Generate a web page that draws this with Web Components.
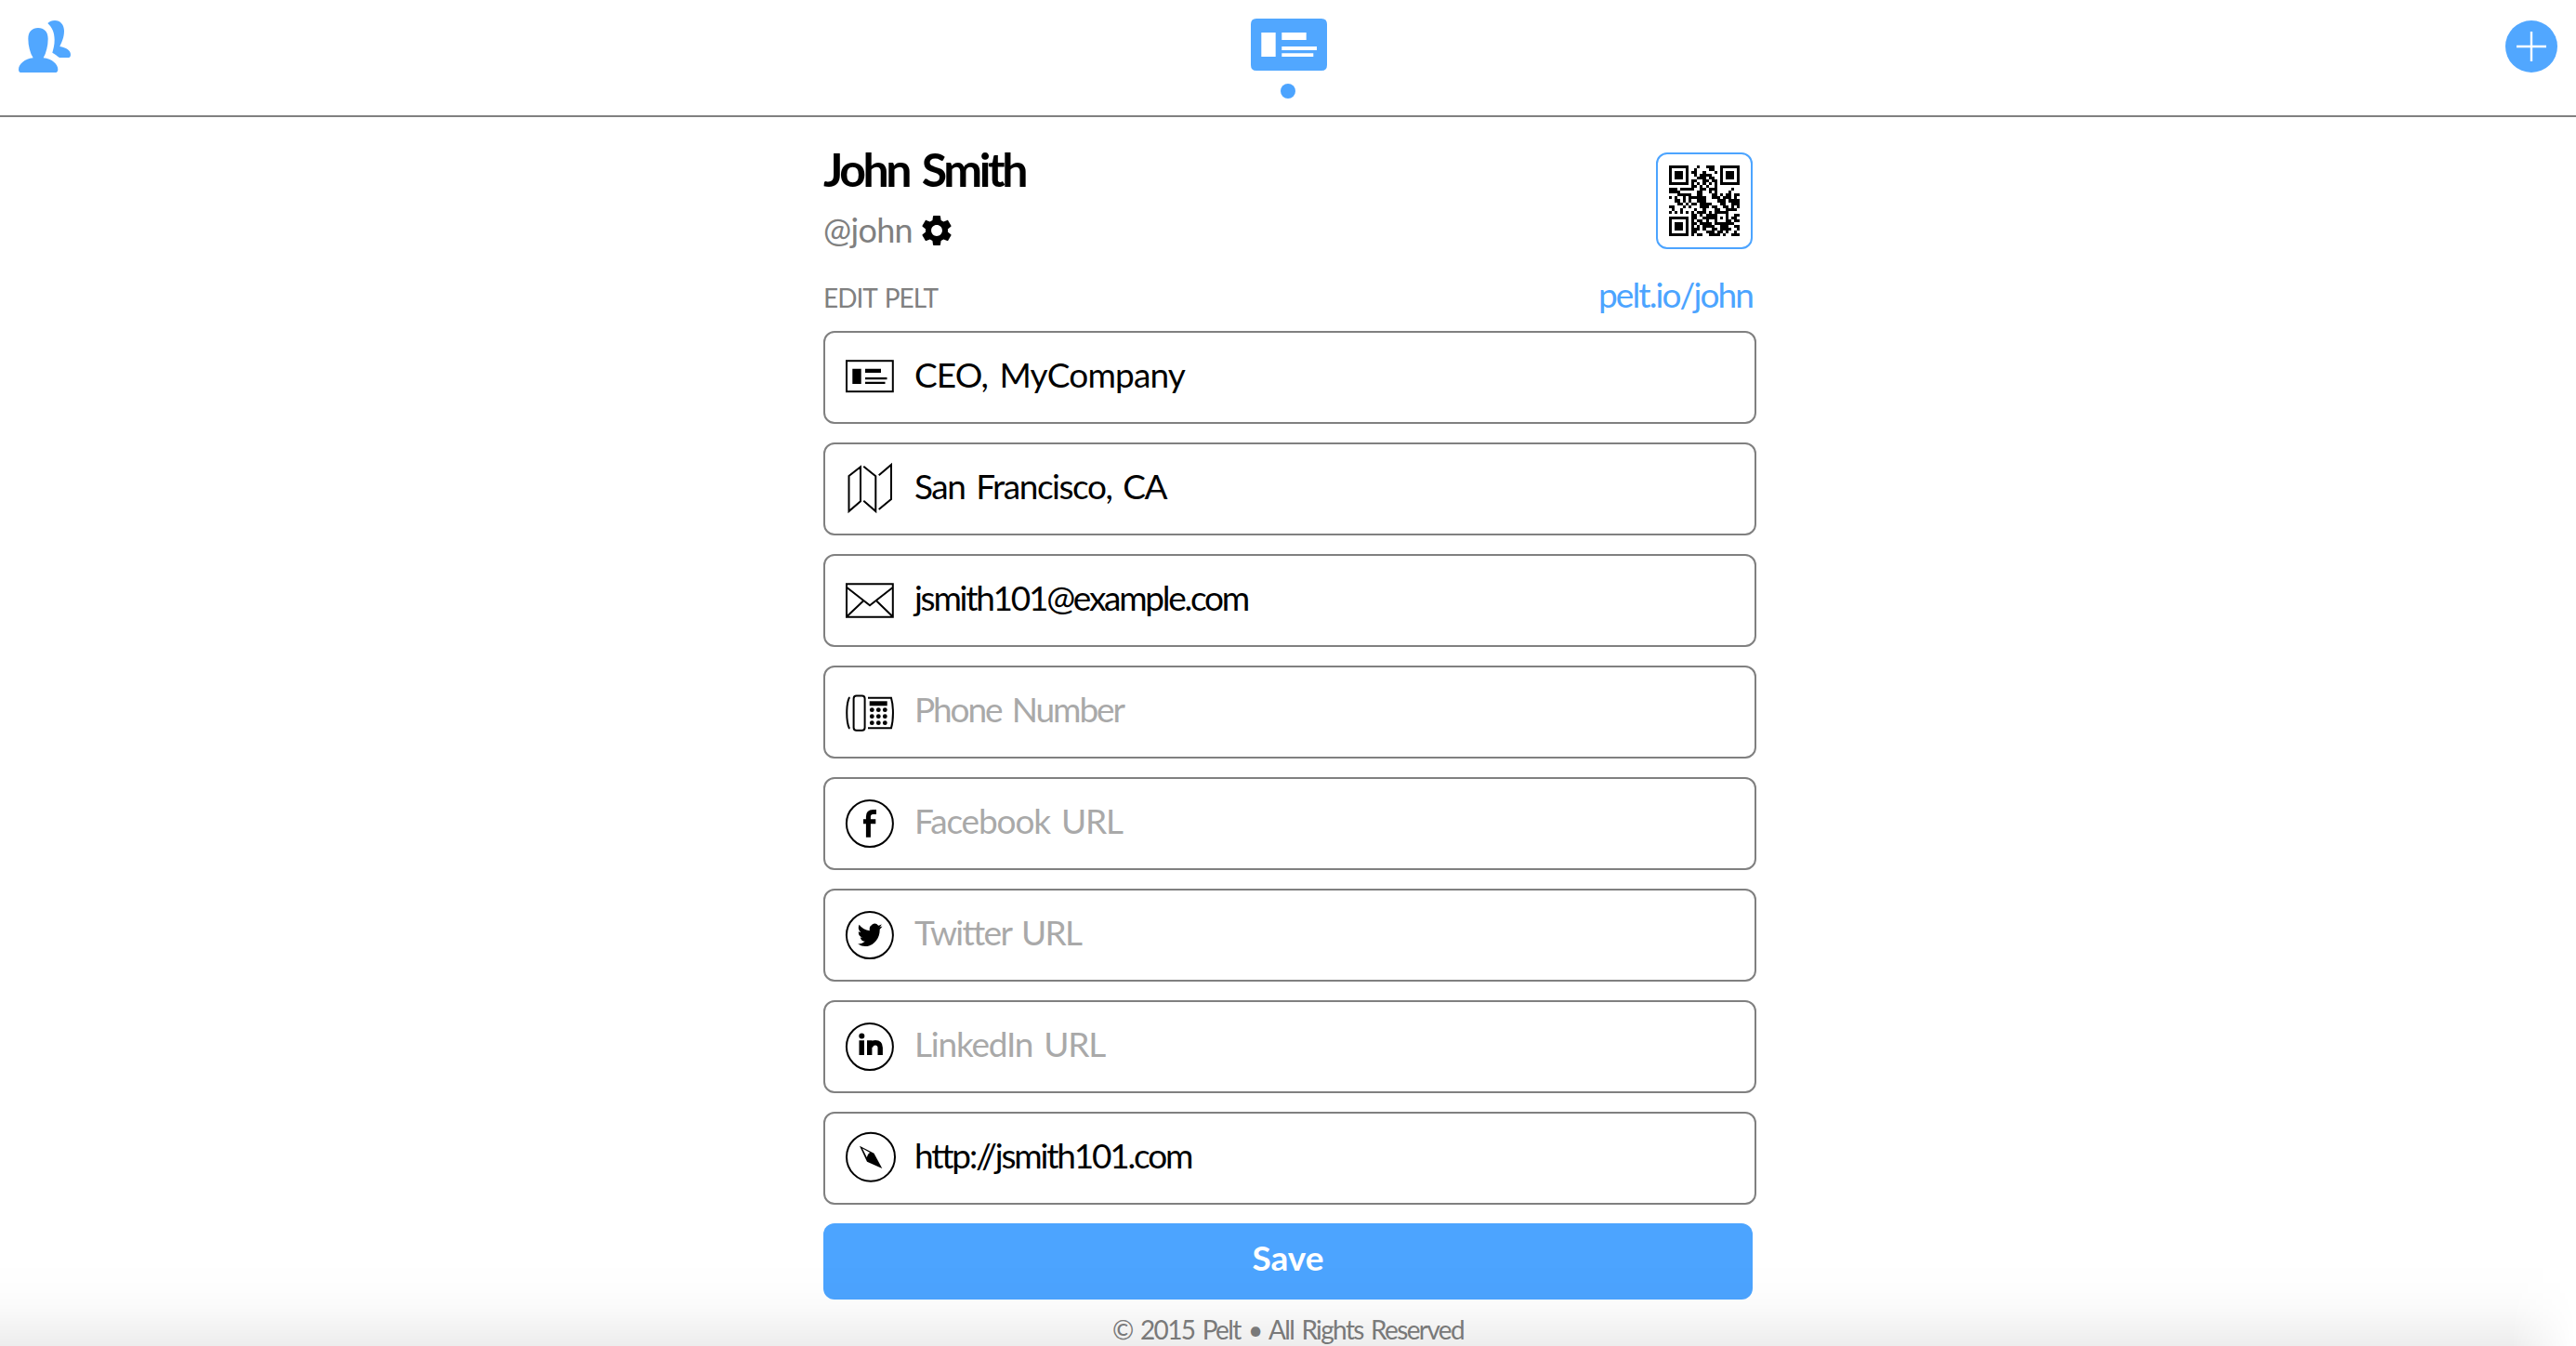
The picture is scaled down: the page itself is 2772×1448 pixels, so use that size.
<!DOCTYPE html>
<html lang="en">
<head>
<meta charset="utf-8">
<title>Pelt</title>
<style>
    body {
        margin: 0;
        background: white;
        color: black;
        font-family: Lato, "Liberation Sans", sans-serif;
    }
</style>
</head>
<body>
<pelt-app>
    <pelt-header></pelt-header>
    <pelt-profile></pelt-profile>
    <pelt-field icon="card" width="291">CEO, MyCompany</pelt-field>
    <pelt-field icon="map" width="271">San Francisco, CA</pelt-field>
    <pelt-field icon="mail" width="359">jsmith101@example.com</pelt-field>
    <pelt-field icon="phone" width="225" empty>Phone Number</pelt-field>
    <pelt-field icon="facebook" width="224" empty>Facebook URL</pelt-field>
    <pelt-field icon="twitter" width="178" empty>Twitter URL</pelt-field>
    <pelt-field icon="linkedin" width="205" empty>LinkedIn URL</pelt-field>
    <pelt-field icon="compass" width="297">http://jsmith101.com</pelt-field>
    <pelt-button>Save</pelt-button>
    <pelt-footer></pelt-footer>
</pelt-app>
<script>
const ICONS = {
    card: `<rect x="1" y="12.2" width="49.8" height="33" class="line"/>
        <path d="M7.3 20.7h9.4V37H7.3zM21 20.7h17V25H21zM21 30h23.5v2.3H21zM21 34.7h21.5V37H21z"/>`,
    map: `<path class="line" d="M3.5 16 16 6.3v37L3.5 54zM19.3 5.7l13 10.6V54l-13-11.3M35.7 15.3 49 4v37L35.7 52"/>`,
    mail: `<path class="line" d="M1 12.2h49.8v35.6H1zM1 15.7l25 19.6 25-19.6M1.5 47l17.2-16.3M50.3 47 33.5 30.7"/>`,
    phone: `<path class="line" d="M4.7 14.7H3.8C.4 22 .4 40 3.8 47.3h.9M24 14.7h25c2.6 9 2.6 23.6 0 32.6H24"/>
        <rect x="8.6" y="12.4" width="12" height="37.4" rx="3" class="line"/>
        <path d="M25.7 18.3h19v5h-19z"/>
        <circle cx="28.3" cy="27.7" r="2.4"/><circle cx="35.3" cy="27.7" r="2.4"/><circle cx="42.3" cy="27.7" r="2.4"/>
        <circle cx="28.3" cy="34.7" r="2.4"/><circle cx="35.3" cy="34.7" r="2.4"/><circle cx="42.3" cy="34.7" r="2.4"/>
        <circle cx="28.3" cy="41.7" r="2.4"/><circle cx="35.3" cy="41.7" r="2.4"/><circle cx="42.3" cy="41.7" r="2.4"/>`,
    facebook: `<circle cx="25.9" cy="30" r="25" class="line"/>
        <path d="M24.4 44.7V22.5q0-5 5-5h3.6M19 27.7h13.3" fill="none" stroke="black" stroke-width="5"/>`,
    twitter: `<circle cx="25.9" cy="30" r="25" class="line"/>
        <path transform="translate(12.7 14) scale(1.67 1.87)" d="M5.026 15c6.038 0 9.341-5.003 9.341-9.334 0-.14 0-.282-.006-.422A6.7 6.7 0 0 0 16 3.542a6.7 6.7 0 0 1-1.889.518 3.3 3.3 0 0 0 1.447-1.817 6.5 6.5 0 0 1-2.087.793A3.286 3.286 0 0 0 7.875 6.03a9.32 9.32 0 0 1-6.767-3.429 3.29 3.29 0 0 0 1.018 4.382A3.3 3.3 0 0 1 .64 6.575v.045a3.29 3.29 0 0 0 2.632 3.218 3.2 3.2 0 0 1-.865.115 3 3 0 0 1-.614-.057 3.28 3.28 0 0 0 3.067 2.277A6.6 6.6 0 0 1 .78 13.58a6 6 0 0 1-.78-.045A9.34 9.34 0 0 0 5.026 15"/>`,
    linkedin: `<circle cx="25.9" cy="30" r="25" class="line"/>
        <circle cx="17.3" cy="18.4" r="3"/>
        <path d="M14.5 23.3H20V39h-5.5zM23 23.3h5.4V39H23z"/>
        <path d="M26.5 30.5q.5-4.7 5.5-4.7t5.2 5.2v8" fill="none" stroke="black" stroke-width="5.4"/>`,
    compass: `<circle cx="27" cy="28.7" r="26" class="line"/>
        <path d="m15 16.7 15.5 8L39.3 41 23 33.7z"/>
        <path d="m18 19.6 8.2 4.4c-1.8.9-2.8 2.7-3.3 5.2z" fill="white"/>`
};

// Spreads the letters of its text over a given width
class FitText extends HTMLElement {
    constructor() {
        super();
        this.attachShadow({ mode: 'open' });
        this.shadowRoot.innerHTML = `
            <style>
                :host { display: inline-block; white-space: nowrap; word-spacing: .1em; }
            </style>
            <slot></slot>
        `;
    }

    connectedCallback() {
        const width = Number(this.getAttribute('width'));
        const natural = this.getBoundingClientRect().width;
        this.style.letterSpacing = (width - natural) / this.textContent.length + 'px';
    }
}

class PeltApp extends HTMLElement {
    constructor() {
        super();
        this.attachShadow({ mode: 'open' });
        this.shadowRoot.innerHTML = `
            <style>
                :host {
                    display: flex;
                    flex-direction: column;
                    align-items: center;
                    gap: 20px;
                    height: 1448px;
                    overflow: hidden;
                }
                .shade {
                    position: fixed;
                    left: 0;
                    right: 0;
                    bottom: 0;
                    height: 92px;
                    pointer-events: none;
                    background: linear-gradient(rgba(0,0,0,0), rgba(0,0,0,.006) 35%, rgba(0,0,0,.02) 55%, rgba(0,0,0,.042) 76%, rgba(0,0,0,.07));
                    -webkit-mask-image: linear-gradient(to right, black 97.5%, transparent);
                    mask-image: linear-gradient(to right, black 97.5%, transparent);
                }
            </style>
            <slot></slot>
            <div class="shade"></div>
        `;
    }
}

class PeltHeader extends HTMLElement {
    constructor() {
        super();
        this.attachShadow({ mode: 'open' });
        this.shadowRoot.innerHTML = `
            <style>
                :host {
                    display: flex;
                    flex: none;
                    justify-content: space-between;
                    align-items: flex-start;
                    box-sizing: border-box;
                    width: 100%;
                    height: 126px;
                    padding: 20px 20px 0;
                    border-bottom: 2px solid #808080;
                }
                svg { display: block; fill: #51a7ff; }
                .side { margin-top: 2px; }
                .tab {
                    display: flex;
                    flex-direction: column;
                    align-items: center;
                    gap: 14px;
                    margin-left: 2px;
                }
                .dot { width: 16px; height: 16px; border-radius: 50%; background: #4ca4ff; margin-right: 2px; }
            </style>
            <svg class="side" width="56" height="56" viewBox="60 66 168 168">
                <path d="M123 90C142 90 155 102 155 125C155 148 149 170 140 187C168 190 187 207 187 224Q187 234 177 234H69Q60 234 60 224C60 207 80 190 107 187C97 170 91 148 91 125C91 102 104 90 123 90Z"/>
                <path d="M154 75C160 69 167 66 177 66C195 66 207 80 207 100C207 120 200 135 193 150C213 153 228 163 228 176Q228 186 219 186H192C184 180 178 175 169 170C173 155 176 145 176 128C176 105 168 88 154 75Z"/>
            </svg>
            <div class="tab">
                <svg width="82" height="56" viewBox="0 0 82 56">
                    <path fill-rule="evenodd" d="M6 0h70q6 0 6 6v44q0 6-6 6H6q-6 0-6-6V6q0-6 6-6zM11.3 15v26h15.4V15zM33.3 15v8h26.4v-8zM33.3 30v4h37.7v-4zM33.3 37.3V41h34v-3.7z"/>
                </svg>
                <div class="dot"></div>
            </div>
            <svg class="side" width="56" height="56" viewBox="0 0 56 56">
                <circle cx="28" cy="28" r="28"/>
                <path d="M28 12v32M12 28h32" stroke="white" stroke-width="2.4"/>
            </svg>
        `;
    }
}

class QrCode extends HTMLElement {
    constructor() {
        super();
        this.attachShadow({ mode: 'open' });
        this.shadowRoot.innerHTML = `
            <style>
                :host {
                    display: flex;
                    align-items: center;
                    justify-content: center;
                    box-sizing: border-box;
                    width: 104px;
                    height: 104px;
                    border: 2px solid #4ca4ff;
                    border-radius: 12px;
                }
            </style>
            <svg width="76" height="76" viewBox="0 0 25 25"></svg>
        `;
    }

    connectedCallback() {
        const rows = [
            '1111111000100111001111111',
            '1000001001000011001000001',
            '1011101011001000101011101',
            '1011101001011110001011101',
            '1011101000111011001011101',
            '1000001011001101101000001',
            '1111111010101010101111111',
            '0000000011010100100000000',
            '1110111110011011100000100',
            '1111000000110010100001000',
            '0001111100110001101011011',
            '1010010111111001110111010',
            '0011010100111000011101111',
            '0001101011011110001100111',
            '1100010100011101100110101',
            '0100100001001000110011110',
            '1010101010111010111110000',
            '0000000011010111100010011',
            '1111111011001111101010110',
            '1000001010110100100011011',
            '1011101011011110111111100',
            '1011101010101111001110011',
            '1011101011101001101111001',
            '1000001011000111011010010',
            '1111111010110011110100111'
        ];
        let d = '';
        rows.forEach((row, y) => {
            [...row].forEach((cell, x) => {
                if (cell === '1') d += `M${x} ${y}h1v1h-1z`;
            });
        });
        this.shadowRoot.querySelector('svg').innerHTML = `<path d="${d}" shape-rendering="crispEdges"/>`;
    }
}

class PeltProfile extends HTMLElement {
    constructor() {
        super();
        this.attachShadow({ mode: 'open' });
        this.shadowRoot.innerHTML = `
            <style>
                :host {
                    display: flex;
                    flex: none;
                    flex-direction: column;
                    box-sizing: border-box;
                    width: 1000px;
                    height: 190px;
                    padding-top: 18px;
                }
                .top, .bottom { display: flex; flex: none; justify-content: space-between; }
                .top { height: 130px; align-items: flex-start; }
                .bottom { align-items: baseline; line-height: 46px; }
                .name { font-size: 50px; font-weight: 700; line-height: 60px; margin-top: -12px; }
                .user {
                    display: flex;
                    align-items: center;
                    gap: 10px;
                    height: 46px;
                    margin-top: 13px;
                    color: #808080;
                    font-size: 36px;
                    line-height: 46px;
                }
                .user svg { fill: black; }
                .user fit-text { margin-top: -2px; }
                .label { color: #808080; font-size: 28px; }
                .link { color: #4ca4ff; font-size: 37px; }
            </style>
            <div class="top">
                <div>
                    <div class="name"><fit-text width="217">John Smith</fit-text></div>
                    <div class="user">
                        <fit-text width="96">@john</fit-text>
                        <svg width="32" height="32" viewBox="2 2 20 20">
                            <path d="M19.43 12.98c.04-.32.07-.64.07-.98s-.03-.66-.07-.98l2.11-1.65c.19-.15.24-.42.12-.64l-2-3.46c-.12-.22-.39-.3-.61-.22l-2.49 1c-.52-.4-1.08-.73-1.69-.98l-.38-2.65C14.46 2.18 14.25 2 14 2h-4c-.25 0-.46.18-.49.42l-.38 2.65c-.61.25-1.17.59-1.69.98l-2.49-1c-.23-.09-.49 0-.61.22l-2 3.46c-.13.22-.07.49.12.64l2.11 1.65c-.04.32-.07.65-.07.98s.03.66.07.98l-2.11 1.65c-.19.15-.24.42-.12.64l2 3.46c.12.22.39.3.61.22l2.49-1c.52.4 1.08.73 1.69.98l.38 2.65c.03.24.24.42.49.42h4c.25 0 .46-.18.49-.42l.38-2.65c.61-.25 1.17-.59 1.69-.98l2.49 1c.23.09.49 0 .61-.22l2-3.46c.12-.22.07-.49-.12-.64l-2.11-1.65zM12 15.7c-2.05 0-3.7-1.65-3.7-3.7s1.65-3.7 3.7-3.7 3.7 1.65 3.7 3.7-1.65 3.7-3.7 3.7z"/>
                        </svg>
                    </div>
                </div>
                <qr-code></qr-code>
            </div>
            <div class="bottom">
                <fit-text class="label" width="123">EDIT PELT</fit-text>
                <fit-text class="link" width="166">pelt.io/john</fit-text>
            </div>
        `;
    }
}

class PeltField extends HTMLElement {
    constructor() {
        super();
        this.attachShadow({ mode: 'open' });
        this.shadowRoot.innerHTML = `
            <style>
                :host {
                    display: flex;
                    align-items: center;
                    gap: 20px;
                    flex: none;
                    box-sizing: border-box;
                    width: 1004px;
                    height: 100px;
                    margin-right: -4px;
                    padding-left: 22px;
                    border: 2px solid #808080;
                    border-radius: 12px;
                    font-size: 37px;
                }
                :host([empty]) { color: #a9a9a9; }
                svg { flex: none; overflow: visible; }
                .line { fill: none; stroke: black; stroke-width: 2; }
                fit-text { line-height: 46px; margin-bottom: 6px; }
            </style>
            <svg width="54" height="60" viewBox="0 0 54 60">${ICONS[this.getAttribute('icon')]}</svg>
            <fit-text width="${this.getAttribute('width')}">${this.textContent}</fit-text>
        `;
    }
}

class PeltButton extends HTMLElement {
    constructor() {
        super();
        this.attachShadow({ mode: 'open' });
        this.shadowRoot.innerHTML = `
            <style>
                :host {
                    display: flex;
                    flex: none;
                    justify-content: center;
                    width: 1000px;
                    height: 82px;
                    border-radius: 12px;
                    background: #4ca4ff;
                    color: white;
                    font-size: 37px;
                    font-weight: 700;
                    line-height: 74px;
                }
            </style>
            <fit-text width="77">${this.textContent}</fit-text>
        `;
    }
}

class PeltFooter extends HTMLElement {
    constructor() {
        super();
        this.attachShadow({ mode: 'open' });
        this.shadowRoot.innerHTML = `
            <style>
                :host { display: block; flex: none; color: #808080; font-size: 28px; line-height: 34px; margin-top: -5px; }
            </style>
            <fit-text width="378">© 2015 Pelt • All Rights Reserved</fit-text>
        `;
    }
}

customElements.define('fit-text', FitText);
customElements.define('pelt-app', PeltApp);
customElements.define('pelt-header', PeltHeader);
customElements.define('qr-code', QrCode);
customElements.define('pelt-profile', PeltProfile);
customElements.define('pelt-field', PeltField);
customElements.define('pelt-button', PeltButton);
customElements.define('pelt-footer', PeltFooter);
</script>
</body>
</html>
